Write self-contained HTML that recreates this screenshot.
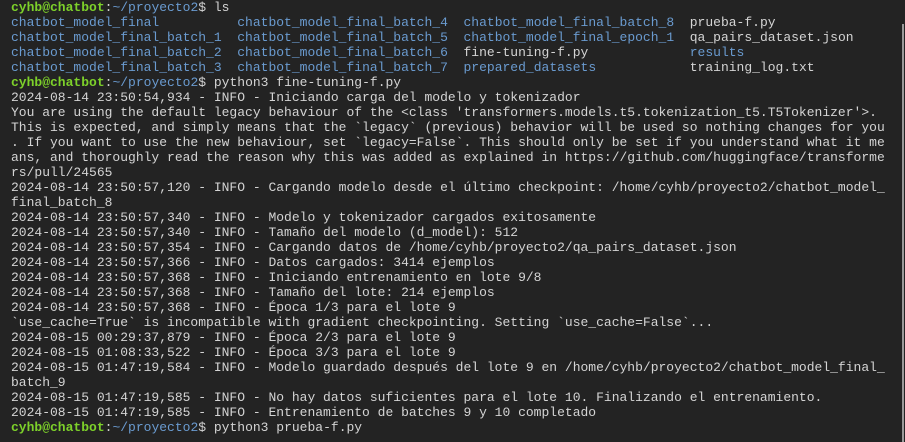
<!DOCTYPE html>
<html><head><meta charset="utf-8"><style>
html,body{margin:0;padding:0;background:#232323;width:905px;height:442px;overflow:hidden}
pre{margin:0;position:absolute;left:11px;top:0;font-family:"Liberation Mono",monospace;font-size:13px;line-height:15px;color:#d4d4d4;white-space:pre}
.g{color:#7dd12a;font-weight:bold}
.b{color:#6a9bd0}
.sb{position:absolute;left:902px;top:24px;width:2px;height:418px;background:#9a9a9a}
</style></head><body>
<pre><span class="g">cyhb@chatbot</span>:<span class="b">~/proyecto2</span>$ ls
<span class="b">chatbot_model_final</span>          <span class="b">chatbot_model_final_batch_4</span>  <span class="b">chatbot_model_final_batch_8</span>  prueba-f.py
<span class="b">chatbot_model_final_batch_1</span>  <span class="b">chatbot_model_final_batch_5</span>  <span class="b">chatbot_model_final_epoch_1</span>  qa_pairs_dataset.json
<span class="b">chatbot_model_final_batch_2</span>  <span class="b">chatbot_model_final_batch_6</span>  fine-tuning-f.py             <span class="b">results</span>
<span class="b">chatbot_model_final_batch_3</span>  <span class="b">chatbot_model_final_batch_7</span>  <span class="b">prepared_datasets</span>            training_log.txt
<span class="g">cyhb@chatbot</span>:<span class="b">~/proyecto2</span>$ python3 fine-tuning-f.py
2024-08-14 23:50:54,934 - INFO - Iniciando carga del modelo y tokenizador
You are using the default legacy behaviour of the &lt;class 'transformers.models.t5.tokenization_t5.T5Tokenizer'&gt;.
This is expected, and simply means that the `legacy` (previous) behavior will be used so nothing changes for you
. If you want to use the new behaviour, set `legacy=False`. This should only be set if you understand what it me
ans, and thoroughly read the reason why this was added as explained in https://github.com/huggingface/transforme
rs/pull/24565
2024-08-14 23:50:57,120 - INFO - Cargando modelo desde el último checkpoint: /home/cyhb/proyecto2/chatbot_model_
final_batch_8
2024-08-14 23:50:57,340 - INFO - Modelo y tokenizador cargados exitosamente
2024-08-14 23:50:57,340 - INFO - Tamaño del modelo (d_model): 512
2024-08-14 23:50:57,354 - INFO - Cargando datos de /home/cyhb/proyecto2/qa_pairs_dataset.json
2024-08-14 23:50:57,366 - INFO - Datos cargados: 3414 ejemplos
2024-08-14 23:50:57,368 - INFO - Iniciando entrenamiento en lote 9/8
2024-08-14 23:50:57,368 - INFO - Tamaño del lote: 214 ejemplos
2024-08-14 23:50:57,368 - INFO - Época 1/3 para el lote 9
`use_cache=True` is incompatible with gradient checkpointing. Setting `use_cache=False`...
2024-08-15 00:29:37,879 - INFO - Época 2/3 para el lote 9
2024-08-15 01:08:33,522 - INFO - Época 3/3 para el lote 9
2024-08-15 01:47:19,584 - INFO - Modelo guardado después del lote 9 en /home/cyhb/proyecto2/chatbot_model_final_
batch_9
2024-08-15 01:47:19,585 - INFO - No hay datos suficientes para el lote 10. Finalizando el entrenamiento.
2024-08-15 01:47:19,585 - INFO - Entrenamiento de batches 9 y 10 completado
<span class="g">cyhb@chatbot</span>:<span class="b">~/proyecto2</span>$ python3 prueba-f.py</pre>
<div class="sb"></div>
</body></html>
